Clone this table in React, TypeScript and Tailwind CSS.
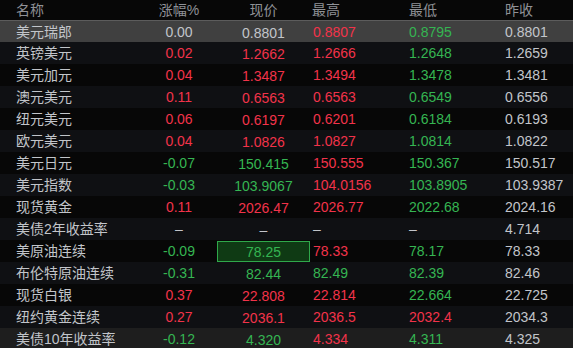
import React from "react";

type Tone = "up" | "down" | "flat";

interface Quote {
    name: string;
    chg: [string, Tone];
    price: [string, Tone];
    high: [string, Tone];
    low: [string, Tone];
    prev: string;
}

const quotes: Quote[] = [
    { name: "美元瑞郎", chg: ["0.00", "flat"], price: ["0.8801", "flat"], high: ["0.8807", "up"], low: ["0.8795", "down"], prev: "0.8801" },
    { name: "英镑美元", chg: ["0.02", "up"], price: ["1.2662", "up"], high: ["1.2666", "up"], low: ["1.2648", "down"], prev: "1.2659" },
    { name: "美元加元", chg: ["0.04", "up"], price: ["1.3487", "up"], high: ["1.3494", "up"], low: ["1.3478", "down"], prev: "1.3481" },
    { name: "澳元美元", chg: ["0.11", "up"], price: ["0.6563", "up"], high: ["0.6563", "up"], low: ["0.6549", "down"], prev: "0.6556" },
    { name: "纽元美元", chg: ["0.06", "up"], price: ["0.6197", "up"], high: ["0.6201", "up"], low: ["0.6184", "down"], prev: "0.6193" },
    { name: "欧元美元", chg: ["0.04", "up"], price: ["1.0826", "up"], high: ["1.0827", "up"], low: ["1.0814", "down"], prev: "1.0822" },
    { name: "美元日元", chg: ["-0.07", "down"], price: ["150.415", "down"], high: ["150.555", "up"], low: ["150.367", "down"], prev: "150.517" },
    { name: "美元指数", chg: ["-0.03", "down"], price: ["103.9067", "down"], high: ["104.0156", "up"], low: ["103.8905", "down"], prev: "103.9387" },
    { name: "现货黄金", chg: ["0.11", "up"], price: ["2026.47", "up"], high: ["2026.77", "up"], low: ["2022.68", "down"], prev: "2024.16" },
    { name: "美债2年收益率", chg: ["–", "flat"], price: ["–", "flat"], high: ["–", "flat"], low: ["–", "flat"], prev: "4.714" },
    { name: "美原油连续", chg: ["-0.09", "down"], price: ["78.25", "down"], high: ["78.33", "up"], low: ["78.17", "down"], prev: "78.33" },
    { name: "布伦特原油连续", chg: ["-0.31", "down"], price: ["82.44", "down"], high: ["82.49", "down"], low: ["82.39", "down"], prev: "82.46" },
    { name: "现货白银", chg: ["0.37", "up"], price: ["22.808", "up"], high: ["22.814", "up"], low: ["22.664", "down"], prev: "22.725" },
    { name: "纽约黄金连续", chg: ["0.27", "up"], price: ["2036.1", "up"], high: ["2036.5", "up"], low: ["2032.4", "up"], prev: "2034.3" },
    { name: "美债10年收益率", chg: ["-0.12", "down"], price: ["4.320", "down"], high: ["4.334", "up"], low: ["4.311", "down"], prev: "4.325" },
];

const toneClass = (t: Tone) =>
    t === "up" ? "text-[#f2334a]" : t === "down" ? "text-[#35b552]" : "text-[#c2c5ca]";

const cols = "grid grid-cols-[132px_62px_100px_99px_96px_1fr] pl-4 items-center";

const QuoteRow = ({ q, idx }: { q: Quote; idx: number }) => {
    const selected = idx === 0;
    const hovered = idx === quotes.length - 1;
    const flash = q.name === "美原油连续";

    let bg = idx % 2 === 1 ? "bg-[#0f1013]" : "bg-[#070707]";
    if (selected) bg = "bg-[#404040] border-t border-[#5c5c5c]";
    if (hovered) bg = "bg-[#1e1e1e]";

    return (
        <div className={`${cols} h-[22px] ${bg}`}>
            <div className="text-[#c2c5ca]">{q.name}</div>
            <div className={`text-center ${toneClass(q.chg[1])}`}>{q.chg[0]}</div>
            <div className="flex h-full items-end justify-end">
                <div
                    className={`flex h-[21px] w-[93px] items-center justify-center ${toneClass(q.price[1])} ${
                        flash ? "border border-[#2fa84a] bg-[#0f3a14]" : ""
                    }`}
                >
                    {q.price[0]}
                </div>
            </div>
            <div className={`pl-[3px] ${toneClass(q.high[1])}`}>{q.high[0]}</div>
            <div className={toneClass(q.low[1])}>{q.low[0]}</div>
            <div className="text-[#c2c5ca]">{q.prev}</div>
        </div>
    );
};

export default function App() {
    return (
        <div
            className="h-[348px] w-full overflow-hidden bg-[#070707] text-[14px] leading-[22px]"
            style={{ fontFamily: '"Liberation Sans", "Noto Sans CJK SC", sans-serif' }}
        >
            <div className={`${cols} h-5 text-[#8f9196] leading-5`}>
                <div>名称</div>
                <div className="text-center">涨幅%</div>
                <div className="flex justify-end">
                    <div className="w-[93px] text-center">现价</div>
                </div>
                <div className="pl-[2px]">最高</div>
                <div>最低</div>
                <div>昨收</div>
            </div>
            {quotes.map((q, i) => (
                <QuoteRow key={q.name} q={q} idx={i} />
            ))}
        </div>
    );
}
